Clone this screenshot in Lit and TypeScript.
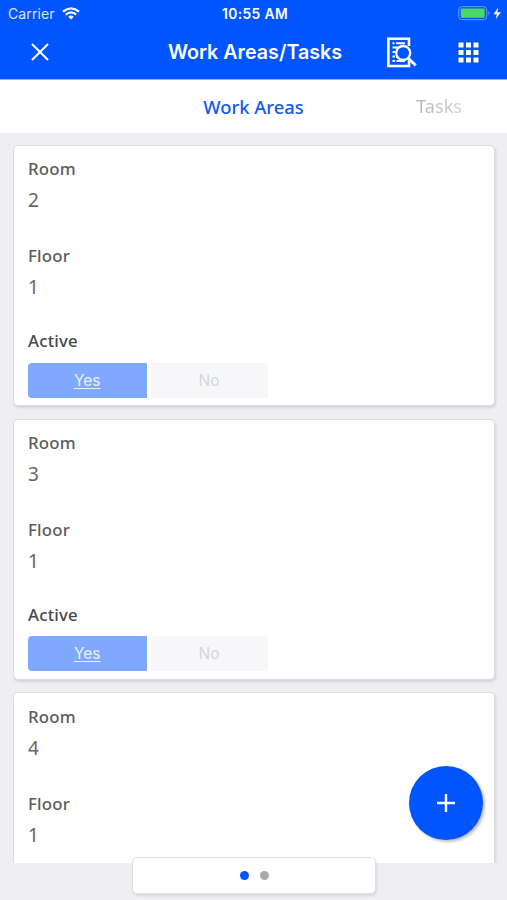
import { LitElement, html, css, nothing } from "lit";
import { customElement, property } from "lit/decorators.js";

@customElement("work-area-card")
class WorkAreaCard extends LitElement {
  @property() room = "";
  @property() floor = "";
  @property({ type: Boolean }) choices = false;

  static styles = css`
    :host {
      display: block;
      box-sizing: border-box;
      flex: none;
      height: 261px;
      padding: 10.4px 14px 0;
      background: #fff;
      border: 1px solid #dddde1;
      border-radius: 5px;
      box-shadow: 1px 2px 3px rgba(0, 0, 0, 0.11);
      font-family: "Noto Sans", sans-serif;
      color: #666;
    }
    .field { height: 87px; }
    .label {
      height: 26px;
      line-height: 26px;
      font-size: 16.8px;
      font-weight: 500;
      letter-spacing: 0.2px;
      color: #5c5c5c;
    }
    .value {
      height: 34px;
      line-height: 36px;
      font-size: 19px;
    }
    .active { color: #484848; margin-top: -2px; }
    .choices {
      display: flex;
      gap: 4px;
      margin-top: 8.4px;
      font: 15.5px/35px Inter, sans-serif;
      text-align: center;
    }
    .choice { height: 35px; }
    .yes {
      width: 118.5px;
      background: #80a8ff;
      color: #eaf0ff;
      border-radius: 4px 0 0 4px;
      text-decoration: underline;
      text-decoration-thickness: 1px;
      text-underline-offset: 2px;
    }
    .no { width: 117px; background: #f7f7f9; color: #d5d5d7; }
  `;

  render() {
    return html`
      <div class="field">
        <div class="label">Room</div>
        <div class="value">${this.room}</div>
      </div>
      <div class="field">
        <div class="label">Floor</div>
        <div class="value">${this.floor}</div>
      </div>
      ${this.choices
        ? html`
            <div class="label active">Active</div>
            <div class="choices">
              <div class="choice yes">Yes</div>
              <div class="choice no">No</div>
            </div>
          `
        : nothing}
    `;
  }
}

@customElement("app-root")
class AppRoot extends LitElement {
  static styles = css`
    :host {
      display: flex;
      flex-direction: column;
      position: relative;
      width: 507px;
      height: 900px;
      overflow: hidden;
      background: #eeeef3;
      font-family: Inter, sans-serif;
    }
    svg { display: block; }
    .header {
      height: 79px;
      flex: none;
      box-sizing: border-box;
      background: #0055ff;
      color: #fff;
    }
    .status, .nav {
      display: grid;
      grid-template-columns: 1fr auto 1fr;
      align-items: center;
    }
    .status { height: 27px; padding: 0 5px 0 8px; font-size: 14px; }
    .carrier { display: flex; align-items: center; gap: 7px; color: #d7e4ff; letter-spacing: 0.1px; }
    .clock { font-weight: 600; font-size: 13.8px; letter-spacing: 0.4px; }
    .battery { justify-self: end; }
    .nav { height: 50px; padding: 0 28px 0 31px; }
    .title { font-size: 19.7px; font-weight: 600; }
    .actions { display: flex; justify-self: end; align-items: center; gap: 41px; }
    .tabs {
      display: grid;
      grid-template-columns: 1fr auto 1fr;
      align-items: center;
      flex: none;
      box-sizing: border-box;
      height: 54px;
      border-top: 1px solid #8db3ff;
      background: #fff;
      font: 500 18.4px/53px "Noto Sans", sans-serif;
    }
    .selected { grid-column: 2; color: #1259ee; }
    .other {
      justify-self: end;
      margin-right: 45px;
      font-size: 18.1px;
      font-weight: 400;
      background: linear-gradient(90deg, #b4b4b4, #d2d2d2);
      background-clip: text;
      color: transparent;
    }
    .list {
      display: flex;
      flex-direction: column;
      gap: 12.7px;
      flex: none;
      box-sizing: border-box;
      height: 730px;
      padding: 12px 12px 0 13px;
      overflow: hidden;
    }
    .add {
      position: absolute;
      left: 409px;
      top: 765.5px;
      width: 74px;
      height: 74px;
      border-radius: 50%;
      display: grid;
      place-items: center;
      background: #0055ff;
      box-shadow: 2px 2px 3px rgba(0, 0, 0, 0.25);
    }
    .pager {
      position: absolute;
      left: 132px;
      top: 857px;
      box-sizing: border-box;
      width: 244px;
      height: 37px;
      display: flex;
      align-items: center;
      justify-content: center;
      gap: 11px;
      background: #fff;
      border: 1px solid #dfdfe3;
      border-radius: 5px;
      box-shadow: 1px 2px 3px rgba(0, 0, 0, 0.09);
    }
    .dot { width: 9px; height: 9px; border-radius: 50%; background: #aaa; }
    .current { background: #0055ff; }
  `;

  private areas = [
    { room: "2", floor: "1", choices: true },
    { room: "3", floor: "1", choices: true },
    { room: "4", floor: "1", choices: false },
  ];

  render() {
    return html`
      <header class="header">
        <div class="status">
          <div class="carrier">
            <span>Carrier</span>
            <svg width="18" height="13" viewBox="0 0 18 13" fill="none" stroke="#fff" stroke-width="2.3">
              <path d="M1 4.7Q9-2 17 4.7M3.8 7.6Q9 3.1 14.2 7.6" />
              <path d="M6.2 9.7Q9 7.5 11.8 9.7L9 12.6Z" fill="#fff" stroke="none" />
            </svg>
          </div>
          <div class="clock">10:55 AM</div>
          <svg class="battery" width="44" height="15" viewBox="0 0 44 15">
            <rect x="0.7" y="0.7" width="28" height="13" rx="3.2" fill="none" stroke="#6d9dff" />
            <rect x="2.7" y="2.6" width="24" height="9.2" rx="1.2" fill="#4cd95f" />
            <path d="M30.3 5.2Q32.5 7.2 30.3 9.2Z" fill="#6d9dff" />
            <path d="M40.2 1.6L35.6 8.3H38.9L37.8 13L42.9 6.3H39.3Z" fill="#fff" />
          </svg>
        </div>
        <div class="nav">
          <svg width="18" height="18" viewBox="0 0 18 18" stroke="#fff" stroke-width="2">
            <path d="M1 1L17 17M17 1L1 17" />
          </svg>
          <div class="title">Work Areas/Tasks</div>
          <div class="actions">
            <svg width="30" height="31" viewBox="0 0 30 31" fill="none" stroke="#fff">
              <path d="M22 9V1.7H1.4V29H22V23.5" stroke-width="2.6" />
              <path d="M9 6.3H18M5.5 6.3H7.5M5.5 10.6H12M5.5 15H8M5.5 19.5H8M5.5 24H8M9.5 24H18M9 20H12" stroke-width="2" />
              <circle cx="16.2" cy="16" r="7" fill="#0055ff" stroke-width="2.3" />
              <path d="M21.3 21.2L28.7 28.4" stroke-width="2.8" />
            </svg>
            <svg width="21" height="21" viewBox="0 0 21 21" fill="#fff">
              <path d="M.5.5h5v5h-5zM8 .5h5v5H8zM15.5.5h5v5h-5zM.5 8h5v5h-5zM8 8h5v5H8zM15.5 8h5v5h-5zM.5 15.5h5v5h-5zM8 15.5h5v5H8zM15.5 15.5h5v5h-5z" />
            </svg>
          </div>
        </div>
      </header>
      <nav class="tabs">
        <span class="selected">Work Areas</span>
        <span class="other">Tasks</span>
      </nav>
      <main class="list">
        ${this.areas.map(
          (a) => html`<work-area-card .room=${a.room} .floor=${a.floor} .choices=${a.choices}></work-area-card>`
        )}
      </main>
      <div class="add">
        <svg width="18" height="18" viewBox="0 0 18 18" stroke="#fff" stroke-width="2.4">
          <path d="M9 0V18M0 9H18" />
        </svg>
      </div>
      <div class="pager">
        <span class="dot current"></span>
        <span class="dot"></span>
      </div>
    `;
  }
}
